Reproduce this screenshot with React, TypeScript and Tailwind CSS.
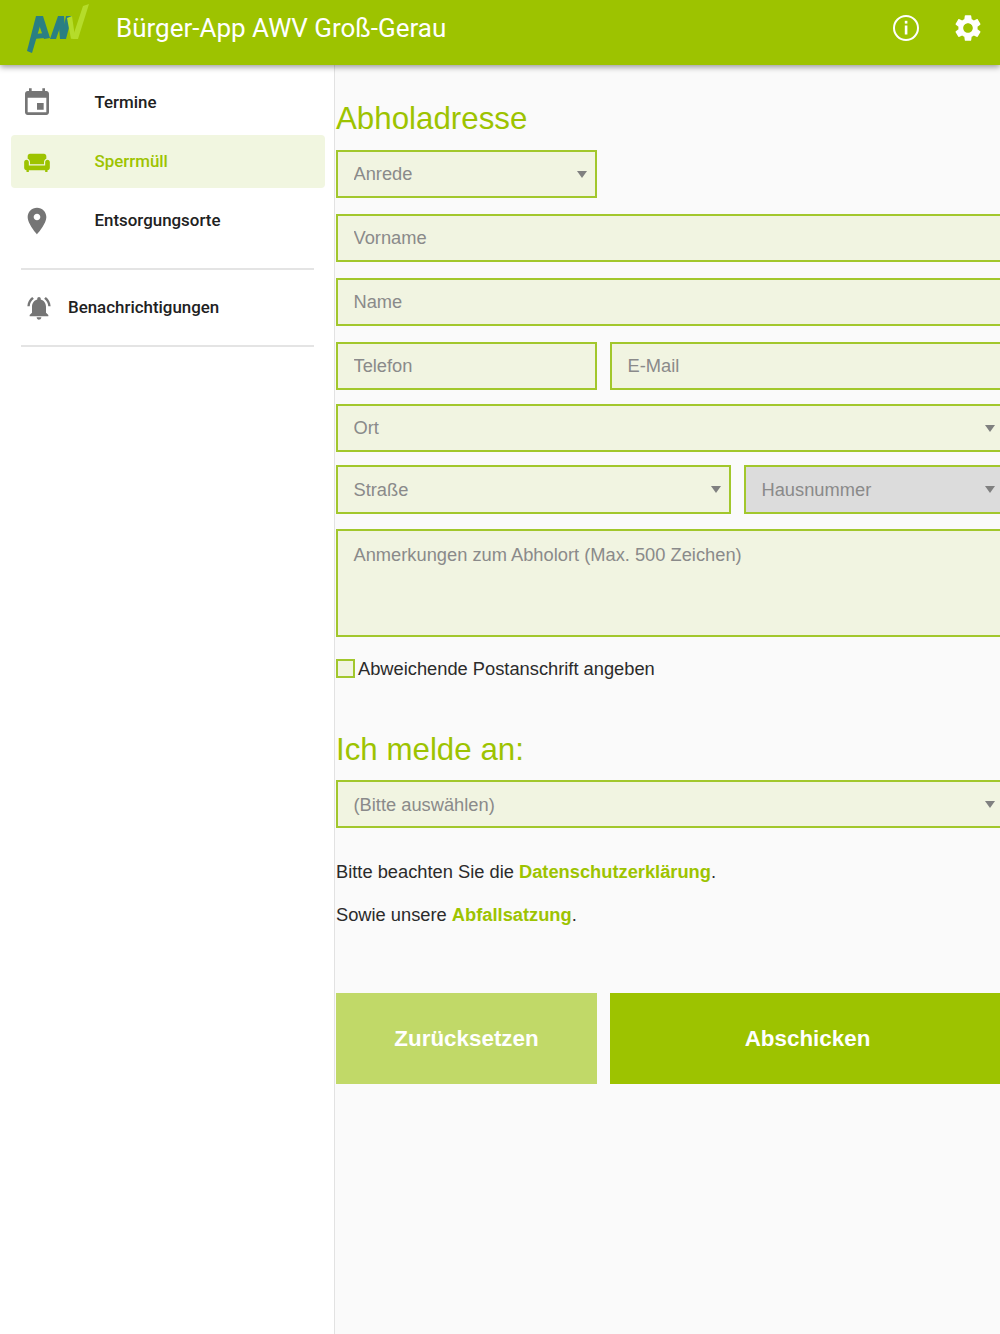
import React from "react";

const paths = {
  event:
    "M17 12h-5v5h5v-5zM16 1v2H8V1H6v2H5c-1.11 0-1.99.9-1.99 2L3 19c0 1.1.89 2 2 2h14c1.1 0 2-.9 2-2V5c0-1.1-.9-2-2-2h-1V1h-2zm3 18H5V8h14v11z",
  sofa:
    "M21 10c-1.1 0-2 .9-2 2v3H5v-3c0-1.1-.9-2-2-2s-2 .9-2 2v5c0 1.1.9 2 2 2v1.5h2V19h14v1.5h2V19c1.1 0 2-.9 2-2v-5c0-1.1-.9-2-2-2zm-3-5H6c-1.1 0-2 .9-2 2v2.15c1.16.41 2 1.51 2 2.82V14h12v-2.03c0-1.3.84-2.4 2-2.82V7c0-1.1-.9-2-2-2z",
  place:
    "M12 2C8.13 2 5 5.13 5 9c0 5.25 7 13 7 13s7-7.75 7-13c0-3.87-3.13-7-7-7zm0 9.5c-1.38 0-2.5-1.12-2.5-2.5s1.12-2.5 2.5-2.5 2.5 1.12 2.5 2.5-1.12 2.5-2.5 2.5z",
  bell:
    "M7.58 4.08L6.15 2.65C3.75 4.48 2.17 7.3 2.03 10.5h2c.15-2.65 1.51-4.97 3.55-6.42zm12.39 6.42h2c-.15-3.2-1.73-6.02-4.12-7.85l-1.42 1.43c2.02 1.45 3.39 3.77 3.54 6.42zM18 11c0-3.07-1.64-5.64-4.5-6.32V4c0-.83-.67-1.5-1.5-1.5s-1.5.67-1.5 1.5v.68C7.63 5.36 6 7.92 6 11v5l-2 2v1h16v-1l-2-2v-5zm-6 11c.14 0 .27-.01.4-.04.65-.14 1.18-.58 1.44-1.18.1-.24.15-.5.15-.78h-4c.01 1.1.9 2 2.01 2z",
  gear:
    "M19.14 12.94c.04-.3.06-.61.06-.94 0-.32-.02-.64-.07-.94l2.03-1.58c.18-.14.23-.41.12-.61l-1.92-3.32c-.12-.22-.37-.29-.59-.22l-2.39.96c-.5-.38-1.03-.7-1.62-.94l-.36-2.54c-.04-.24-.24-.41-.48-.41h-3.84c-.24 0-.43.17-.47.41l-.36 2.54c-.59.24-1.13.57-1.62.94l-2.39-.96c-.22-.08-.47 0-.59.22L2.74 8.87c-.12.21-.08.47.12.61l2.03 1.58c-.05.3-.09.63-.09.94s.02.64.07.94l-2.03 1.58c-.18.14-.23.41-.12.61l1.92 3.32c.12.22.37.29.59.22l2.39-.96c.5.38 1.03.7 1.62.94l.36 2.54c.05.24.24.41.48.41h3.84c.24 0 .44-.17.47-.41l.36-2.54c.59-.24 1.13-.56 1.62-.94l2.39.96c.22.08.47 0 .59-.22l1.92-3.32c.12-.22.07-.47-.12-.61l-2.01-1.58zM12 15.6c-1.98 0-3.6-1.62-3.6-3.6s1.62-3.6 3.6-3.6 3.6 1.62 3.6 3.6-1.62 3.6-3.6 3.6z",
};

function Icon({ d, className }: { d: string; className: string }) {
  return (
    <svg viewBox="0 0 24 24" fill="currentColor" className={className}>
      <path d={d} />
    </svg>
  );
}

function Logo() {
  return (
    <svg viewBox="0 0 70 56" className="w-[70px] h-[56px]">
      <polygon points="2,50 7,52 18,15 11,15" fill="#2a7f83" />
      <polygon points="11,15 18,15 25,37 19,38" fill="#2a7f83" />
      <polygon points="9,33 21,32 20,37 8,38" fill="#2a7f83" />
      <polygon points="25,38 33,15 39,15 31,38" fill="#2a7f83" />
      <polygon points="33,15 39,15 41,38 35,38" fill="#2a7f83" />
      <polygon points="36,38 41,15 47,15 41,38" fill="#2a7f83" />
      <polygon points="42,17 47,15 50,36 46,38" fill="#b5dc2a" />
      <polygon points="47,38 58,5 64,3 53,38" fill="#b5dc2a" />
    </svg>
  );
}

const fieldClass =
  "w-full border-2 border-[#a2c72c] px-[15.5px] text-[18.3px] text-[#8a8a8a] placeholder:text-[#8a8a8a] outline-none rounded-none";

function Field({ placeholder }: { placeholder: string }) {
  return (
    <input
      type="text"
      placeholder={placeholder}
      className={`${fieldClass} h-12 bg-[#f1f4e1]`}
    />
  );
}

function Select({
  label,
  disabled,
  tall,
}: {
  label: string;
  disabled?: boolean;
  tall?: boolean;
}) {
  return (
    <div className="relative">
      <select
        disabled={disabled}
        className={`${fieldClass} ${tall ? "h-[49px]" : "h-12"} appearance-none ${disabled ? "bg-[#dcdcdc]" : "bg-[#f1f4e1]"}`}
      >
        <option>{label}</option>
      </select>
      <div className="absolute right-[10px] top-[21px] w-0 h-0 border-x-[5px] border-x-transparent border-t-[7px] border-t-[#808080]" />
    </div>
  );
}

function NavItem({
  icon,
  label,
  active,
}: {
  icon: string;
  label: string;
  active?: boolean;
}) {
  return (
    <div
      className={`flex items-center h-[53px] ml-[11px] mr-[9px] rounded-[4px] ${
        active ? "bg-[#f1f6e0] text-[#9dc300]" : "text-[#212121]"
      }`}
    >
      <div className="w-[83.5px] pl-[10px]">
        {active ? (
          <Icon d={icon} className="w-[28px] h-[28px] ml-[2px] text-[#9dc300]" />
        ) : (
          <Icon d={icon} className="w-[32px] h-[32px] text-[#757575]" />
        )}
      </div>
      <span className="text-[16.9px] font-medium">{label}</span>
    </div>
  );
}

export default function App() {
  return (
    <div className="w-[1000px] h-[1334px] overflow-hidden flex flex-col bg-white font-['Roboto',sans-serif]">
      <header className="relative z-10 h-[65px] shrink-0 bg-[#9dc300] shadow-[0_2px_6px_rgba(0,0,0,0.4)] flex items-center text-white">
        <div className="ml-[25px] w-[91px] -mt-[7px]">
          <Logo />
        </div>
        <h1 className="flex-1 text-[26px] leading-none -mt-[9px]">Bürger-App AWV Groß-Gerau</h1>
        <svg viewBox="0 0 28 28" className="w-[28px] h-[28px] mr-[32px] -mt-[9px]" fill="none">
          <circle cx="14" cy="14" r="12" stroke="white" strokeWidth="2" />
          <rect x="12.8" y="11.5" width="2.6" height="9" fill="white" />
          <rect x="12.8" y="6.8" width="2.6" height="2.8" fill="white" />
        </svg>
        <Icon d={paths.gear} className="w-[32px] h-[32px] mr-[16px] -mt-[9px]" />
      </header>

      <div className="flex flex-1 min-h-0">
        <aside className="w-[335px] shrink-0 border-r border-[#e2e2e2] bg-white pt-[11px]">
          <div className="flex flex-col gap-[6px]">
            <NavItem icon={paths.event} label="Termine" />
            <NavItem icon={paths.sofa} label="Sperrmüll" active />
            <NavItem icon={paths.place} label="Entsorgungsorte" />
          </div>
          <div className="ml-[21px] mr-[20px] mt-[21px] border-t-2 border-[#e4e4e4]" />
          <div className="mx-[21px] h-[75px] flex items-center text-[#212121]">
            <Icon d={paths.bell} className="w-[28px] h-[28px] ml-[4px] mr-[15px] text-[#757575]" />
            <span className="text-[16.9px] font-medium">Benachrichtigungen</span>
          </div>
          <div className="ml-[21px] mr-[20px] border-t-2 border-[#e4e4e4]" />
        </aside>

        <main className="flex-1 bg-[#fafafa] pl-[1px] pt-[33px] overflow-hidden font-['Liberation_Sans',sans-serif]">
          <form className="w-[669px]">
            <h2 className="text-[31.3px] leading-[42px] text-[#9dc300] mb-[10px]">Abholadresse</h2>
            <div className="w-[261px]">
              <Select label="Anrede" />
            </div>
            <div className="mt-[16px]">
              <Field placeholder="Vorname" />
            </div>
            <div className="mt-[16px]">
              <Field placeholder="Name" />
            </div>
            <div className="mt-[16px] grid grid-cols-[261px_1fr] gap-[13px]">
              <Field placeholder="Telefon" />
              <Field placeholder="E-Mail" />
            </div>
            <div className="mt-[14px]">
              <Select label="Ort" />
            </div>
            <div className="mt-[13px] grid grid-cols-[395px_1fr] gap-[13px]">
              <Select label="Straße" tall />
              <Select label="Hausnummer" disabled tall />
            </div>
            <textarea
              placeholder="Anmerkungen zum Abholort (Max. 500 Zeichen)"
              className={`${fieldClass} bg-[#f1f4e1] block mt-[15px] h-[108px] py-[10px] resize-none`}
            />
            <label className="mt-[18px] flex items-center gap-[3px] text-[18.3px] text-[#2b2b2b]">
              <span className="w-[19px] h-[19px] border-2 border-[#a2c72c] bg-[#f1f4e1]" />
              Abweichende Postanschrift angeben
            </label>
            <h2 className="mt-[47px] text-[31.3px] leading-[42px] text-[#9dc300] mb-[9px]">Ich melde an:</h2>
            <Select label="(Bitte auswählen)" />
            <p className="mt-[31px] text-[18.3px] leading-[26px] text-[#2b2b2b]">
              Bitte beachten Sie die <a className="font-bold text-[#9dc300]">Datenschutzerklärung</a>.
            </p>
            <p className="mt-[17px] text-[18.3px] leading-[26px] text-[#2b2b2b]">
              Sowie unsere <a className="font-bold text-[#9dc300]">Abfallsatzung</a>.
            </p>
            <div className="mt-[65px] grid grid-cols-[261px_1fr] gap-[13px]">
              <button type="button" className="h-[91px] bg-[#c1d968] text-white text-[22.4px] font-bold">
                Zurücksetzen
              </button>
              <button type="button" className="h-[91px] bg-[#9dc300] text-white text-[22.4px] font-bold">
                Abschicken
              </button>
            </div>
          </form>
        </main>
      </div>
    </div>
  );
}
